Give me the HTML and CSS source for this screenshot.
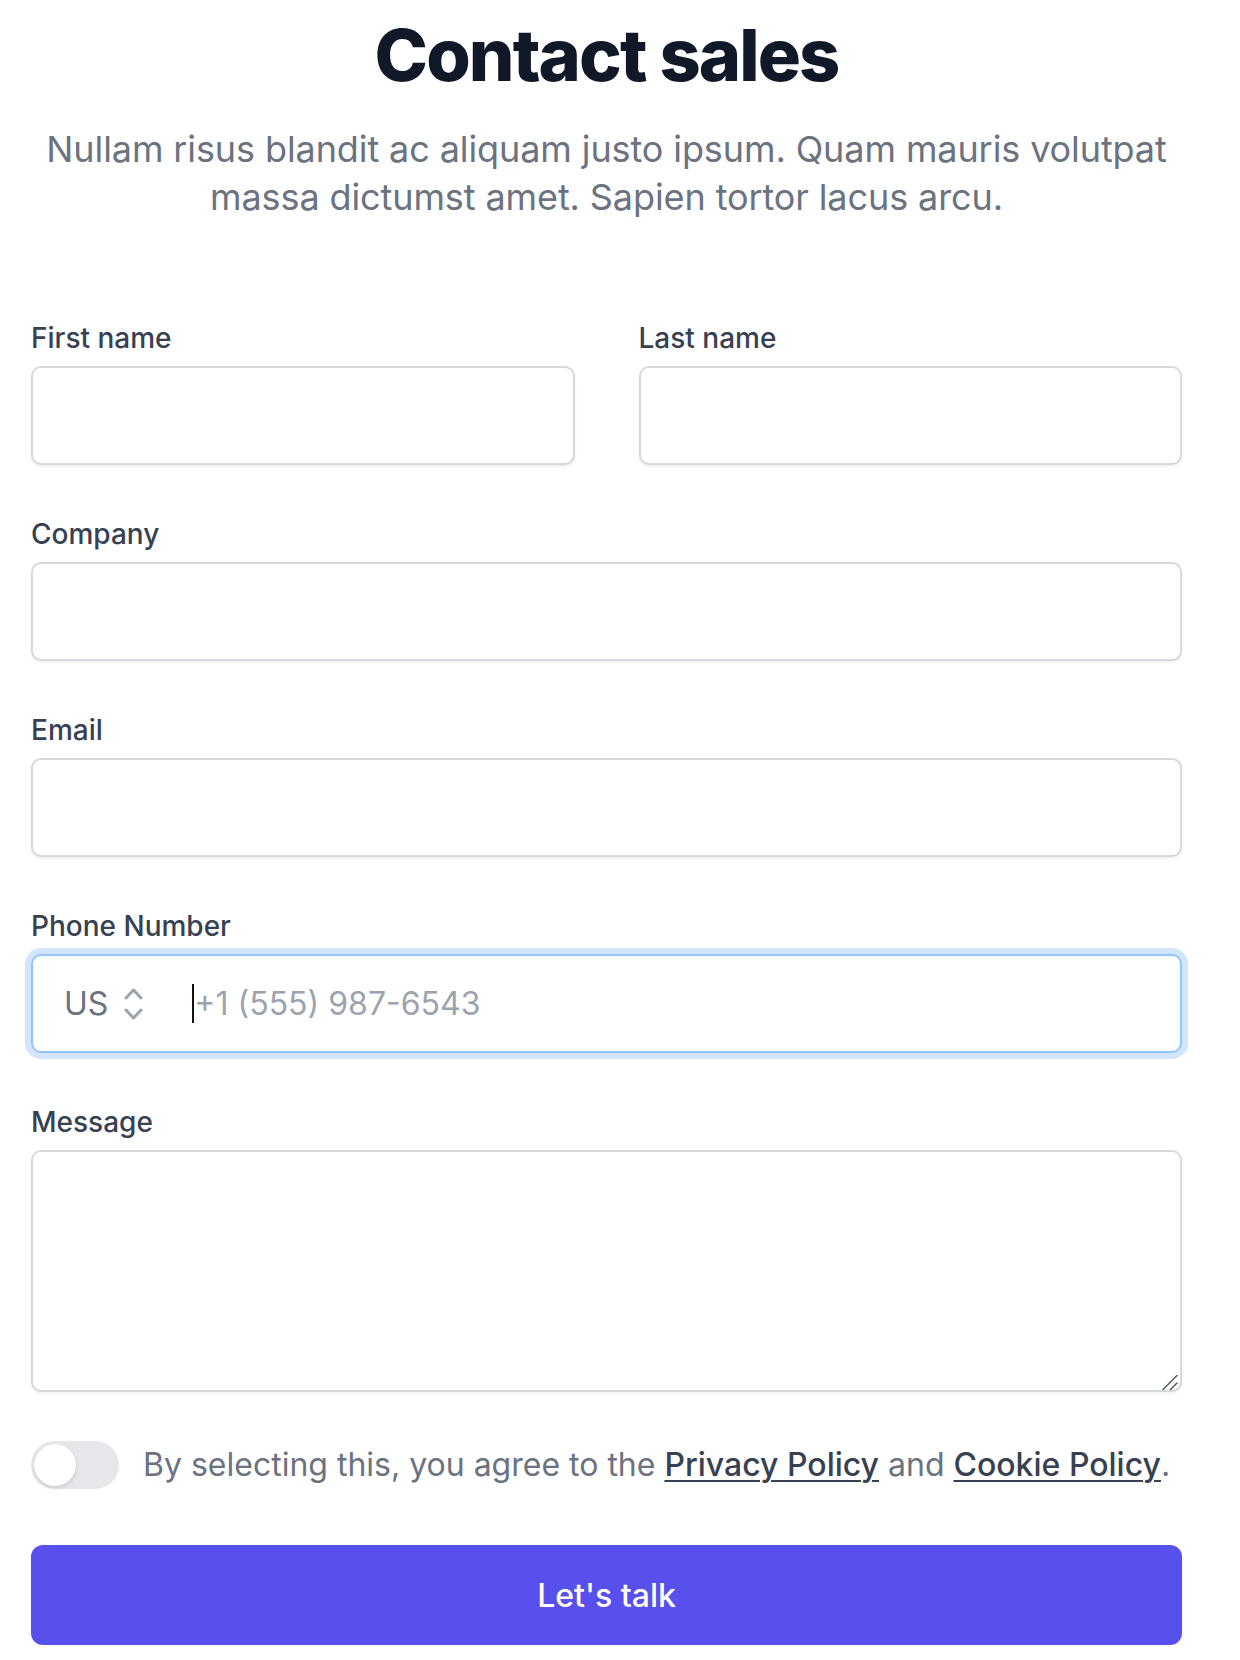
FILE: index.html
```html
<!DOCTYPE html>
<html lang="en">
<head>
<meta charset="utf-8">
<title>Contact sales</title>
<link rel="stylesheet" href="styles.css">
</head>
<body>
<main class="page">
  <header class="intro">
    <h1 class="title">Contact sales</h1>
    <p class="lead">Nullam risus blandit ac aliquam justo ipsum. Quam mauris volutpat massa dictumst amet. Sapien tortor lacus arcu.</p>
  </header>
  <form class="form">
    <div class="grid">
      <div class="field">
        <label class="label" for="first">First name</label>
        <input class="control" id="first" type="text">
      </div>
      <div class="field">
        <label class="label" for="last">Last name</label>
        <input class="control" id="last" type="text">
      </div>
      <div class="field span2">
        <label class="label" for="company">Company</label>
        <input class="control" id="company" type="text">
      </div>
      <div class="field span2">
        <label class="label" for="email">Email</label>
        <input class="control" id="email" type="email">
      </div>
      <div class="field span2">
        <label class="label" for="phone">Phone Number</label>
        <div class="phone">
          <div class="country">
            <span class="country-code">US</span>
            <svg class="chevrons" width="19" height="34" viewBox="0 0 19 34" fill="none" stroke="#9ca3af" stroke-width="3" stroke-linecap="round" stroke-linejoin="round"><path d="M2 11 9.5 3 17 11"/><path d="M2 23 9.5 31 17 23"/></svg>
          </div>
          <span class="caret"></span>
          <input class="phone-input" id="phone" type="tel" placeholder="+1 (555) 987-6543">
        </div>
      </div>
      <div class="field span2">
        <label class="label" for="message">Message</label>
        <div class="area-wrap">
          <textarea class="control area" id="message"></textarea>
          <svg class="resizer" width="18" height="18" viewBox="0 0 18 18" fill="none" stroke="#5b5f66" stroke-width="1.6" stroke-linecap="round"><path d="M2 16.5 16 2.5"/><path d="M9.5 16.5 16 10"/></svg>
        </div>
      </div>
    </div>
    <div class="agree">
      <span class="switch"><span class="knob"></span></span>
      <p class="agree-text">By selecting this, you agree to the <a href="#" class="link">Privacy Policy</a> and <a href="#" class="link">Cookie Policy</a>.</p>
    </div>
    <button class="submit" type="button">Let's talk</button>
  </form>
</main>
</body>
</html>
```
FILE: styles.css
```css
html, body {
  margin: 0;
  padding: 0;
  background: #ffffff;
}
body {
  font-family: Inter, "Noto Sans", sans-serif;
  color: #111827;
}
.page {
  width: 1151px;
  margin-left: 31px;
}
.intro {
  text-align: center;
  padding-top: 15px;
}
.title {
  margin: 0;
  font-size: 72px;
  line-height: 80px;
  font-weight: 800;
  letter-spacing: -1.9px;
  color: #111827;
}
.lead {
  margin: 30px 0 0;
  font-size: 36px;
  line-height: 48px;
  letter-spacing: -0.1px;
  color: #6b7280;
}
.form {
  margin-top: 97px;
}
.grid {
  display: grid;
  grid-template-columns: minmax(0, 1fr) minmax(0, 1fr);
  column-gap: 64px;
  row-gap: 49px;
}
.span2 {
  grid-column: span 2;
}
.field {
  display: flex;
  flex-direction: column;
  min-width: 0;
}
.label {
  font-size: 28px;
  line-height: 40px;
  font-weight: 500;
  color: #374151;
}
.control {
  display: block;
  width: 100%;
  min-width: 0;
  margin-top: 8px;
  height: 99px;
  box-sizing: border-box;
  border: 2px solid #d5d8dd;
  border-radius: 10px;
  background: #fff;
  box-shadow: 0 2px 3px rgba(0, 0, 0, 0.06);
  font-family: inherit;
  font-size: 32px;
  padding: 0 32px;
  outline: none;
}
.area-wrap {
  position: relative;
  margin-top: 8px;
}
.area {
  margin-top: 0;
  height: 242px;
  resize: none;
  padding: 20px 32px;
}
.resizer {
  position: absolute;
  right: 3px;
  bottom: 1px;
}
.phone {
  margin-top: 8px;
  height: 99px;
  box-sizing: border-box;
  border: 2px solid #93c5fd;
  border-radius: 10px;
  background: #fff;
  box-shadow: 0 0 0 6px #d3e5fd;
  display: flex;
  align-items: center;
  padding-left: 31px;
  min-width: 0;
}
.country {
  display: flex;
  align-items: center;
  gap: 16px;
}
.country-code {
  font-size: 32px;
  line-height: 40px;
  color: #6b7280;
}
.chevrons {
  display: block;
}
.caret {
  flex: none;
  width: 2px;
  height: 39px;
  background: #111;
  margin-left: 49px;
}
.phone-input {
  flex: 1;
  min-width: 0;
  border: 0;
  outline: none;
  background: transparent;
  font-family: inherit;
  font-size: 32px;
  padding: 0;
  color: #111827;
  height: 48px;
}
.phone-input::placeholder {
  color: #9ca3af;
}
.agree {
  margin-top: 49px;
  display: flex;
  align-items: center;
  gap: 24px;
}
.switch {
  flex: none;
  width: 88px;
  height: 48px;
  border-radius: 24px;
  background: #e5e7eb;
  display: flex;
  align-items: center;
  padding: 0 3px;
  box-sizing: border-box;
}
.knob {
  width: 42px;
  height: 42px;
  border-radius: 50%;
  background: #fff;
  box-shadow: 0 2px 4px rgba(0, 0, 0, 0.12), 0 0 1px rgba(0, 0, 0, 0.08);
}
.agree-text {
  margin: 0;
  font-size: 32px;
  line-height: 48px;
  color: #6b7280;
}
.link {
  color: #374151;
  font-weight: 500;
  text-decoration: underline;
  text-decoration-thickness: 2px;
  text-underline-offset: 4px;
}
.submit {
  display: block;
  margin-top: 56px;
  width: 100%;
  height: 100px;
  border: 0;
  border-radius: 12px;
  background: #5850ec;
  color: #fff;
  font-family: inherit;
  font-size: 32px;
  font-weight: 500;
  box-shadow: 0 2px 4px rgba(0, 0, 0, 0.08);
  cursor: pointer;
}
```
